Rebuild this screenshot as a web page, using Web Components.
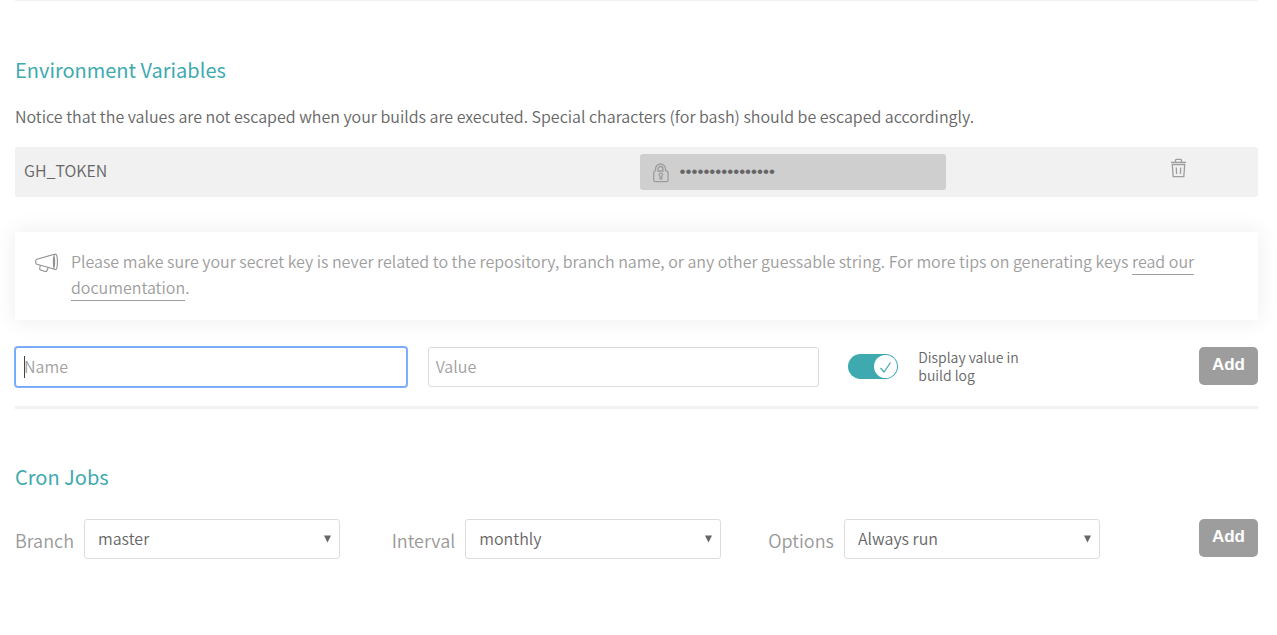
<!DOCTYPE html>
<html lang="en">
<head>
<meta charset="utf-8">
<meta name="viewport" content="width=device-width, initial-scale=1">
<title>Repository settings</title>
<style>
  body {
    margin: 0;
    background: #fff;
    color: #666;
    font: 350 16px/26px "Noto Sans CJK SC", "Open Sans", sans-serif;
    --teal: #3eaaaf;
    --grey: #9d9d9d;
    --pale: #f1f1f1;
    --line: #dcdcdc;
  }
</style>
</head>
<body>
<repo-settings></repo-settings>

<script>
const define = (name, html, setup) => {
  const template = document.createElement('template');
  template.innerHTML = html;
  customElements.define(name, class extends HTMLElement {
    constructor() {
      super();
      this.attachShadow({ mode: 'open' }).append(template.content.cloneNode(true));
    }
    connectedCallback() {
      if (setup) setup(this, this.shadowRoot);
    }
  });
};

define('settings-section', `
  <style>
    :host { display: block; }
    h2 { margin: 0; color: var(--teal); font-size: 20px; line-height: 30px; font-weight: 400; }
  </style>
  <section><h2><slot name="title"></slot></h2><slot></slot></section>
`);

define('add-button', `
  <style>
    :host { display: block; }
    button {
      display: block; width: 59px; height: 38px; padding: 0 0 2px; border: 0; border-radius: 5px;
      background: var(--grey); color: #fff; font: 700 17px/36px "Liberation Sans", sans-serif;
      cursor: pointer;
    }
  </style>
  <button type="button"><slot>Add</slot></button>
`);

define('env-var', `
  <style>
    :host {
      display: grid; grid-template-columns: 100fr 49fr 50fr; align-items: center;
      height: 50px; background: var(--pale); border-radius: 3px;
    }
    .name { padding: 0 9px 4px; }
    .value {
      display: flex; align-items: center; gap: 10px; height: 36px; padding-left: 12px;
      box-sizing: border-box; background: #cfcfcf; border-radius: 3px;
    }
    .value svg { flex: none; margin-top: 2px; }
    input {
      flex: 1; min-width: 0; padding: 0; border: 0; background: none; color: #666; outline: 0;
      font: 17px/30px "Liberation Sans", sans-serif;
    }
    button { justify-self: end; margin-right: 71px; padding: 0 0 8px; border: 0; background: none; line-height: 0; }
    svg { fill: none; stroke: #9d9d9d; }
  </style>
  <span class="name" id="name"><slot></slot></span>
  <div class="value">
    <svg width="18" height="20" viewBox="0 0 18 20" stroke-width="1.3" aria-hidden="true">
      <path d="M3.5 8V6a5 5 0 0 1 10 0v2M6 8V6a2.5 2.500 0 0 1 5 0v2z"/>
      <path d="M3.500 7.600Q1.700 8 1.700 9.700v7.300q0 1.700 1.700 1.700h11q1.700 0 1.700-1.700V9.700Q16.100 8 13.500 7.600"/>
      <path d="M8 15.800v-2.600a1.700 1.700 0 1 1 1.800 0v2.600z"/>
    </svg>
    <input type="password" value="0123456789abcdef" readonly aria-label="Value of GH_TOKEN">
  </div>
  <button type="button" aria-label="Delete variable">
    <svg width="17" height="20" viewBox="0 0 17 20" stroke-width="1.300">
      <path d="M1 4.500h15M5.500 4.300V2.300q0-1 1-1h4q1 0 1 1v2M2.300 6.600h12.400l-.9 12.100H3.200zM6.300 9.500l.3 6.500M10.700 9.500l-.3 6.500"/>
    </svg>
  </button>
`);

define('tip-box', `
  <style>
    :host {
      display: flex; gap: 12px; padding: 16px 20px 20px; color: #9d9d9d; background: #fff;
      box-shadow: 0 0 20px 3px rgba(0, 0, 0, .06);
    }
    svg { flex: none; margin-top: 5px; fill: none; stroke: #8f8f8f; }
    p { margin: 0; }
  </style>
  <svg width="24" height="20" viewBox="0 0 24 20" stroke-width="1.100" aria-hidden="true">
    <path d="M19.500 1.200L2 6.300q-1.200.400-1.200 1.400v2.400q0 1 1.200 1.200l17.700 4.900"/>
    <ellipse cx="20.400" cy="8.900" rx="2" ry="7.800"/>
    <path d="M5.200 12.400l-.5 3.300q0 1 .9 1.300l4.500 1.500q1.400.3 1.800-.8l1.200-3M19.200 3.500q1 5 0 10.500"/>
  </svg>
  <p><slot></slot></p>
`);

define('text-field', `
  <style>
    :host { display: block; position: relative; }
    input {
      display: block; width: 100%; height: 40px; box-sizing: border-box; padding: 0 7px 2px;
      border: 1px solid var(--line); border-radius: 3px; background: #fff; color: #666;
      font: inherit; outline: 0;
    }
    input::placeholder { color: #9f9f9f; opacity: 1; }
    .caret { display: none; position: absolute; left: 9px; top: 9px; width: 1px; height: 22px; background: #444; }
    :host([active]) input { padding-left: 8px; border-color: #74a8f8; box-shadow: 0 0 0 1px #7fb0fa; }
    :host([active]) .caret { display: block; }
  </style>
  <input type="text"><span class="caret"></span>
`, (host, root) => {
  const input = root.querySelector('input');
  input.placeholder = host.getAttribute('label');
  input.setAttribute('aria-label', host.getAttribute('label'));
});

define('toggle-switch', `
  <style>
    :host { display: block; }
    label { display: flex; align-items: center; gap: 20px; font-size: 14px; line-height: 18px; }
    .track { position: relative; flex: none; width: 50px; height: 25px; }
    input {
      appearance: none; display: block; width: 50px; height: 25px; margin: 0; border-radius: 13px;
      background: #ccc;
    }
    input:checked { background: var(--teal); }
    svg { position: absolute; top: 1px; right: 1px; pointer-events: none; }
    .text { width: 108px; }
  </style>
  <label>
    <span class="track">
      <input type="checkbox" checked>
      <svg width="23" height="23" viewBox="0 0 23 23" aria-hidden="true">
        <circle cx="11.500" cy="11.500" r="11.500" fill="#fff"/>
        <path d="M6.500 13l3.500 4 6.500-9.500" fill="none" stroke="#3eaaaf" stroke-width="1.200"/>
      </svg>
    </span>
    <span class="text"><slot></slot></span>
  </label>
`);

define('select-field', `
  <style>
    :host { display: flex; align-items: center; gap: 10px; }
    label { padding-top: 2px; color: #999; font-size: 18px; }
    .box { position: relative; width: 68%; }
    select {
      appearance: none; display: block; width: 100%; height: 40px; box-sizing: border-box;
      padding: 0 30px 2px 13px; border: 1px solid var(--line); border-radius: 3px;
      background: #fff; color: #666; font: inherit;
    }
    svg { position: absolute; right: 9px; top: 16px; fill: #666; pointer-events: none; }
  </style>
  <label for="select"></label>
  <div class="box">
    <select id="select"><option></option></select>
    <svg width="7" height="8" viewBox="0 0 7 8" aria-hidden="true"><path d="M0 .500h7L3.500 7.500z"/></svg>
  </div>
`, (host, root) => {
  root.querySelector('label').textContent = host.getAttribute('label');
  root.querySelector('option').textContent = host.getAttribute('value');
});

define('repo-settings', `
  <style>
    :host { display: block; padding: 0 19px 0 15px; }
    hr { margin: 0; border: 0; height: 1px; background: var(--pale); }
    .env { margin-top: 54px; }
    .env p { margin: 18px 0; }
    tip-box { margin: 35px 0 27px; }
    .new-var { display: grid; grid-template-columns: 11fr 6fr; align-items: start; padding-bottom: 19px; border-bottom: 3px solid var(--pale); }
    .fields { display: grid; grid-template-columns: 1fr 1fr; gap: 21px; }
    .actions { display: flex; justify-content: space-between; padding-left: 29px; }
    toggle-switch { padding-top: 1px; }
    .cron { margin-top: 53px; }
    .new-cron { display: grid; grid-template-columns: repeat(3, 1fr) 113px; margin-top: 27px; }
    .new-cron add-button { justify-self: end; }
    a { color: inherit; text-decoration: none; padding-bottom: 1px; border-bottom: 1px solid currentColor; }
  </style>
  <hr>
  <main>
    <settings-section class="env">
      <span slot="title">Environment Variables</span>
      <p>Notice that the values are not escaped when your builds are executed. Special characters (for bash) should be escaped accordingly.</p>
      <env-var>GH_TOKEN</env-var>
      <tip-box>Please make sure your secret key is never related to the repository, branch name, or any other guessable string. For more tips on generating keys <a href="#docs">read our documentation</a>.</tip-box>
      <div class="new-var">
        <div class="fields">
          <text-field label="Name" active></text-field>
          <text-field label="Value"></text-field>
        </div>
        <div class="actions">
          <toggle-switch>Display value in build log</toggle-switch>
          <add-button>Add</add-button>
        </div>
      </div>
    </settings-section>
    <settings-section class="cron">
      <span slot="title">Cron Jobs</span>
      <div class="new-cron">
        <select-field label="Branch" value="master"></select-field>
        <select-field label="Interval" value="monthly"></select-field>
        <select-field label="Options" value="Always run"></select-field>
        <add-button>Add</add-button>
      </div>
    </settings-section>
  </main>
`);
</script>
</body>
</html>
